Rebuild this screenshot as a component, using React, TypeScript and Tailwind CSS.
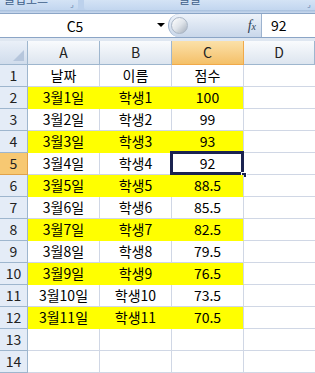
import React from 'react';

const rows: { a: string; b: string; c: string; fill?: boolean }[] = [
  { a: '날짜', b: '이름', c: '점수' },
  { a: '3월1일', b: '학생1', c: '100', fill: true },
  { a: '3월2일', b: '학생2', c: '99' },
  { a: '3월3일', b: '학생3', c: '93', fill: true },
  { a: '3월4일', b: '학생4', c: '92' },
  { a: '3월5일', b: '학생5', c: '88.5', fill: true },
  { a: '3월6일', b: '학생6', c: '85.5' },
  { a: '3월7일', b: '학생7', c: '82.5', fill: true },
  { a: '3월8일', b: '학생8', c: '79.5' },
  { a: '3월9일', b: '학생9', c: '76.5', fill: true },
  { a: '3월10일', b: '학생10', c: '73.5' },
  { a: '3월11일', b: '학생11', c: '70.5', fill: true },
  { a: '', b: '', c: '' },
  { a: '', b: '', c: '' },
];

const colHead = 'h-[24px] flex items-center justify-center border-r border-b border-[#9eb6ce] text-[14px] text-[#222]';

export default function App() {
  return (
    <div className="w-[315px] h-[373px] overflow-hidden bg-white font-['Noto_Sans_CJK_KR','Noto_Sans',sans-serif] text-black select-none">
      {/* ribbon group labels (cut off) */}
      <div className="h-[10px] flex bg-[#bcd1ec] overflow-hidden">
        <div className="w-[78px] relative bg-gradient-to-b from-[#d4e3f5] to-[#c2d6ef] rounded-br-[3px] overflow-hidden">
          <span className="absolute left-[4px] top-[-8px] text-[12px] text-[#3e5f8a] leading-[14px]">클립보드</span>
          <span className="absolute right-[4px] top-[0px] text-[8px] text-[#5a7aa5] leading-[8px]">⌟</span>
        </div>
        <div className="w-[6px]" />
        <div className="flex-1 relative bg-gradient-to-b from-[#d4e3f5] to-[#c2d6ef] rounded-bl-[3px] overflow-hidden">
          <span className="absolute left-[95px] top-[-8px] text-[12px] text-[#3e5f8a] leading-[14px]">글꼴</span>
          <span className="absolute right-[4px] top-[0px] text-[8px] text-[#5a7aa5] leading-[8px]">⌟</span>
        </div>
      </div>
      <div className="h-[3px] bg-gradient-to-b from-[#a7bfdd] to-[#c9d9ee]" />

      {/* formula bar */}
      <div className="h-[25px] flex border-y border-[#8ba5c6] bg-white">
        <div className="w-[168px] relative flex items-center">
          <span className="w-[150px] text-center text-[14px] leading-none">C5</span>
          <span className="absolute left-[157px] top-[9px] w-0 h-0 border-l-[4px] border-r-[4px] border-t-[4px] border-l-transparent border-r-transparent border-t-black" />
        </div>
        <div className="w-[94px] relative flex items-center border-r border-[#9db3cf] bg-gradient-to-b from-[#eef3fa] via-[#dbe5f2] to-[#c9d7ea] rounded-l-[12px] border-l border-[#9db3cf]">
          <span className="absolute left-[2px] top-[3px] w-[17px] h-[17px] rounded-full bg-gradient-to-br from-[#ffffff] via-[#dfe4ea] to-[#a5afbb] border border-[#aab6c6]" />
          <span className="absolute right-[5px] top-[1px] text-[14px] italic font-['Liberation_Serif',serif] text-[#2f3f55]">f<span className="text-[10px]">x</span></span>
        </div>
        <div className="flex-1 flex items-center pl-[9px] text-[14px]">92</div>
      </div>
      <div className="h-[3px] bg-[#dfe7f1]" />

      {/* sheet grid */}
      <div className="grid grid-cols-[28px_72px_72px_72px_71px]">
        <div className="h-[24px] relative border-r border-b border-[#9eb6ce] bg-gradient-to-b from-[#eaf0f8] to-[#d0dcec]">
          <span className="absolute right-[3px] bottom-[3px] w-0 h-0 border-l-[12px] border-t-[12px] border-l-transparent border-t-transparent border-b-0 border-r-0" />
          <span className="absolute right-[3px] bottom-[3px] w-0 h-0 border-b-[11px] border-l-[11px] border-b-[#b6c6dc] border-l-transparent" />
        </div>
        <div className={`${colHead} bg-gradient-to-b from-[#f9fbfd] to-[#dde5ef]`}>A</div>
        <div className={`${colHead} bg-gradient-to-b from-[#f9fbfd] to-[#dde5ef]`}>B</div>
        <div className={`${colHead} bg-gradient-to-b from-[#fbe1a9] to-[#f4c068] border-[#f0a94a]`}>C</div>
        <div className={`${colHead} bg-gradient-to-b from-[#f9fbfd] to-[#dde5ef]`}>D</div>

        {rows.map((r, i) => {
          const n = i + 1;
          const sel = n === 5;
          const fillCell = r.fill
            ? 'bg-[#ffff00] border-b border-[#ffff00]'
            : 'bg-white border-b border-[#d0d7e5]';
          return (
            <React.Fragment key={n}>
              <div
                className={`h-[22px] flex items-center justify-center border-r border-b text-[14px] text-[#222] ${
                  sel ? 'bg-[#f7c872] border-[#e0a24a]' : 'bg-[#e4ecf7] border-[#9eb6ce]'
                }`}
              >
                {n}
              </div>
              <div className={`h-[22px] flex items-center justify-center text-[14px] border-r ${fillCell} ${r.fill ? 'border-r-[#ffff00]' : 'border-r-[#d0d7e5]'}`}>
                {r.a}
              </div>
              <div className={`h-[22px] flex items-center justify-center text-[14px] border-r ${fillCell} ${r.fill ? 'border-r-[#ffff00]' : 'border-r-[#d0d7e5]'}`}>
                {r.b}
              </div>
              <div className={`h-[22px] relative flex items-center justify-center text-[14px] border-r border-r-[#d0d7e5] ${fillCell}`}>
                {r.c}
                {sel && (
                  <>
                    <span className="absolute left-[-2px] top-[-2px] right-[-1px] bottom-[-1px] border-[3px] border-[#1b2350]" />
                    <span className="absolute right-[-4px] bottom-[-4px] w-[6px] h-[6px] bg-[#1b2350] border border-white" />
                  </>
                )}
              </div>
              <div className="h-[22px] border-b border-[#d0d7e5] bg-white" />
            </React.Fragment>
          );
        })}
      </div>
    </div>
  );
}
